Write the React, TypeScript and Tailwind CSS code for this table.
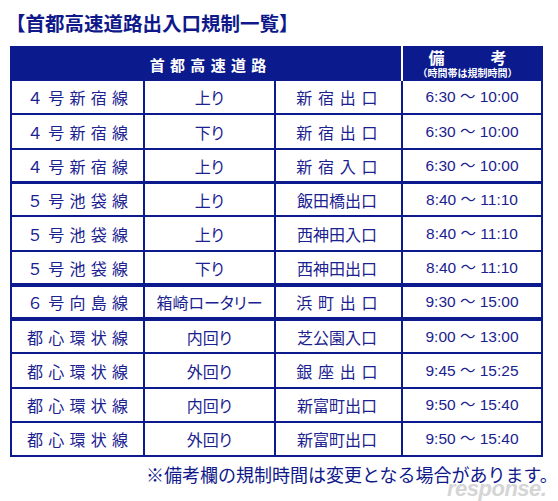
import React from "react";

const NAVY = "border-[#0b1a8c]";

const rows = [
  { line: "４号新宿線", dir: "上り", exit: "新宿出口", time: "6:30 ～ 10:00", row: "h-[32px]" },
  { line: "４号新宿線", dir: "下り", exit: "新宿出口", time: "6:30 ～ 10:00", row: "h-[35px] border-t-2" },
  { line: "４号新宿線", dir: "上り", exit: "新宿入口", time: "6:30 ～ 10:00", row: "h-[33px] border-t-2" },
  { line: "５号池袋線", dir: "上り", exit: "飯田橋出口", time: "8:40 ～ 11:10", row: "h-[34px] border-t-[3px]" },
  { line: "５号池袋線", dir: "上り", exit: "西神田入口", time: "8:40 ～ 11:10", row: "h-[35px] border-t-2" },
  { line: "５号池袋線", dir: "下り", exit: "西神田出口", time: "8:40 ～ 11:10", row: "h-[33px] border-t-2" },
  { line: "６号向島線", dir: "箱崎ロータリー", exit: "浜町出口", time: "9:30 ～ 15:00", row: "h-[34px] border-t-4" },
  { line: "都心環状線", dir: "内回り", exit: "芝公園入口", time: "9:00 ～ 13:00", row: "h-[35px] border-t-4" },
  { line: "都心環状線", dir: "外回り", exit: "銀座出口", time: "9:45 ～ 15:25", row: "h-[35px] border-t-2" },
  { line: "都心環状線", dir: "内回り", exit: "新富町出口", time: "9:50 ～ 15:40", row: "h-[34px] border-t-2" },
  { line: "都心環状線", dir: "外回り", exit: "新富町出口", time: "9:50 ～ 15:40", row: "h-[34px] border-t-2" },
];

// spread each character over its own equal-width box, like the spaced-out cells
function Spaced({ text, className }: { text: string; className: string }) {
  return (
    <span className={`flex ${className}`}>
      {Array.from(text).map((ch, i) => (
        <span key={i} className="flex-1 text-center">
          {ch}
        </span>
      ))}
    </span>
  );
}

export default function App() {
  return (
    <div
      className="relative w-[558px] h-[501px] bg-white text-[#1b2290] overflow-hidden"
      style={{ fontFamily: '"Noto Sans CJK JP", "Noto Sans", sans-serif' }}
    >
      <div className="h-[46px] flex items-center pl-[6px] text-[19.5px] font-bold text-[#10198a] whitespace-nowrap">
        【首都高速道路出入口規制一覧】
      </div>

      <div className={`ml-[10px] w-[533px] border-2 ${NAVY}`}>
        {/* header */}
        <div className="flex h-[33px] bg-[#0b1a8c] text-white font-bold">
          <div className="w-[389px] flex items-center justify-center pl-[3px]">
            <Spaced text="首都高速道路" className="w-[122px] text-[15px] leading-none" />
          </div>
          <div className="flex-1 border-l-2 border-white flex flex-col items-center pr-[9px] -mt-[2px]">
            <span className="flex justify-between w-[78px] text-[16px] leading-[16px] pt-[3px]">
              <span>備</span>
              <span>考</span>
            </span>
            <span className="text-[10px] leading-[11px] mt-[2px] whitespace-nowrap">（時間帯は規制時間）</span>
          </div>
        </div>

        {/* body */}
        {rows.map((r, i) => (
          <div key={i} className={`flex ${NAVY} ${r.row}`}>
            <div className="w-[131px] flex items-center justify-center">
              <Spaced text={r.line} className="w-[106px] text-[16px] leading-none" />
            </div>
            <div className={`w-[131px] border-l-2 ${NAVY} flex items-center justify-center text-[16px] leading-none [font-feature-settings:'palt']`}>
              {r.dir}
            </div>
            <div className={`w-[127px] border-l-2 ${NAVY} flex items-center justify-center pr-[3px]`}>
              {r.exit.length === 4 ? (
                <Spaced text={r.exit} className="w-[87px] text-[16px] leading-none" />
              ) : (
                <span className="text-[16px] leading-none">{r.exit}</span>
              )}
            </div>
            <div
              className={`flex-1 border-l-2 ${NAVY} flex items-center justify-center text-[15.5px] leading-none`}
              style={{ fontFamily: '"Liberation Sans", "Noto Sans CJK JP", sans-serif' }}
            >
              {r.time}
            </div>
          </div>
        ))}
      </div>

      <div className="h-[34px] flex items-center pl-[146px] whitespace-nowrap text-[18px] text-[#10198a]">
        ※備考欄の規制時間は変更となる場合があります。
      </div>

      {/* watermark */}
      <div
        className="absolute left-[447px] top-[478px] text-[22px] italic font-bold text-[#c4c4c4] opacity-70 tracking-[-0.5px] leading-none"
        style={{ fontFamily: '"Liberation Sans", sans-serif' }}
      >
        response.
      </div>
    </div>
  );
}
